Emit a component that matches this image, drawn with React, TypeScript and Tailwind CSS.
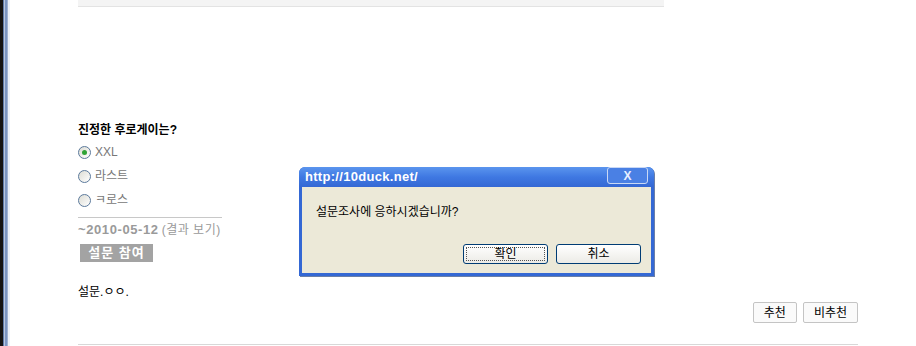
import React from "react"

const font = { fontFamily: '"Liberation Sans", "Noto Sans CJK KR", sans-serif' }

function Radio({ checked }: { checked?: boolean }) {
    return (
        <span className="w-[13px] h-[13px] rounded-full border border-[#5c7a9c] bg-gradient-to-br from-[#dcdcd4] to-white flex items-center justify-center shrink-0">
            {checked && <span className="w-[5px] h-[5px] rounded-full bg-[#2fa335]" />}
        </span>
    )
}

function XpButton({ label, focused }: { label: string; focused?: boolean }) {
    return (
        <button className="w-[85px] h-[20px] rounded-[3px] border border-[#003c74] bg-gradient-to-b from-white to-[#ecebe6] text-[12px] text-black flex items-center justify-center p-[2px]">
            <span
                className={
                    focused
                        ? "w-full h-full flex items-center justify-center border border-dotted border-[#555]"
                        : "w-full h-full flex items-center justify-center"
                }
            >
                {label}
            </span>
        </button>
    )
}

export default function App() {
    const options = ["XXL", "라스트", "ㅋ로스"]

    return (
        <div className="w-[916px] h-[346px] relative overflow-hidden bg-white flex" style={font}>
            {/* window frame on the left */}
            <div className="flex h-full shrink-0">
                <div className="w-[3px] bg-[#141414]" />
                <div className="w-[1px] bg-[#5f7aa8]" />
                <div className="w-[1px] bg-[#b6c6de]" />
                <div className="w-[2px] bg-[#7b95c2]" />
                <div className="w-[1px] bg-[#9fb3d4]" />
                <div className="w-[2px] bg-[#eef3fa]" />
            </div>

            <div className="flex-1 pl-[68px] pr-[58px] flex flex-col">
                <div className="w-[586px] h-[7px] bg-[#f4f4f4] border-b border-[#e3e3e3]" />

                <div className="mt-[115px] h-[16px] leading-[16px] text-[12px] font-bold text-black">
                    진정한 후로게이는?
                </div>

                <div className="mt-[2px] flex flex-col">
                    {options.map((o, i) => (
                        <div key={o} className="h-[24px] flex items-center gap-[4px] text-[12px] text-[#777]">
                            <Radio checked={i === 0} />
                            <span>{o}</span>
                        </div>
                    ))}
                </div>

                <div className="mt-[5px] w-[144px] border-t border-[#c8c8c8]" />

                <div className="mt-[3px] h-[16px] leading-[16px] text-[#9a9a9a] whitespace-nowrap">
                    <span className="font-bold text-[13px] tracking-[0.6px]">~2010-05-12</span>
                    <span className="ml-[3px] text-[12px] tracking-[0.5px]">(결과 보기)</span>
                </div>

                <div className="mt-[7px] ml-[2px] w-[73px] h-[18px] bg-[#a3a3a3] text-white text-[13px] font-bold tracking-[1px] flex items-center justify-center">
                    설문 참여
                </div>

                <div className="mt-[22px] h-[16px] leading-[16px] text-[12px] text-black">설문.ㅇㅇ.</div>

                <div className="mt-[2px] flex justify-end gap-[6px]">
                    <button className="h-[21px] px-[10px] border border-[#c4c4c4] rounded-[2px] bg-[#fafafa] text-[12px] text-black">
                        추천
                    </button>
                    <button className="h-[21px] px-[10px] border border-[#c4c4c4] rounded-[2px] bg-[#fafafa] text-[12px] text-black">
                        비추천
                    </button>
                </div>

                <div className="mt-[21px] border-t border-[#d8d8d8]" />
            </div>

            {/* alert dialog */}
            <div className="absolute left-[299px] top-[167px] w-[355px] h-[109px] flex flex-col rounded-t-[6px] bg-[#3468d4] px-[3px] pb-[3px] shadow-[1px_1px_0_#6a7fa8]">
                <div className="h-[20px] flex items-center justify-between bg-gradient-to-b from-[#5b95ee] via-[#3f78e2] to-[#3468d4] rounded-t-[6px] -mx-[3px] px-[6px]">
                    <span className="text-white text-[13px] font-bold tracking-[0.3px]">http://10duck.net/</span>
                    <span className="w-[41px] h-[17px] mt-[-3px] rounded-[3px] border border-[#c9d8f5] bg-[#4a80e4] flex items-center justify-center text-[#e8efff] text-[12px] font-bold leading-none">
                        X
                    </span>
                </div>
                <div className="flex-1 bg-[#ece9d8] flex flex-col">
                    <div className="mt-[17px] ml-[14px] text-[12px] text-black leading-[16px]">
                        설문조사에 응하시겠습니까?
                    </div>
                    <div className="mt-auto mb-[9px] mr-[10px] flex justify-end gap-[8px]">
                        <XpButton label="확인" focused />
                        <XpButton label="취소" />
                    </div>
                </div>
            </div>
        </div>
    )
}
